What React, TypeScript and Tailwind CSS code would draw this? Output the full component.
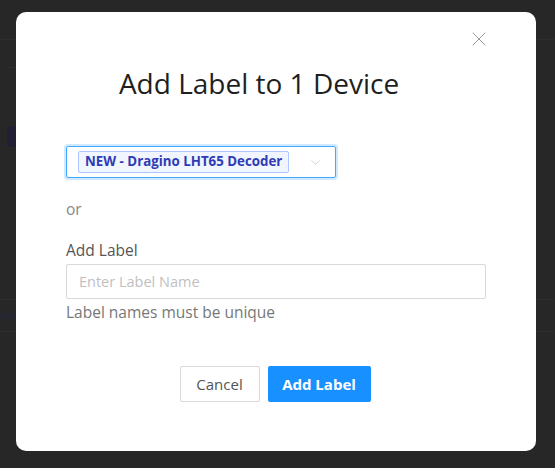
import { X, ChevronDown } from "lucide-react";

export default function App() {
  return (
    <div className="relative w-[555px] h-[468px] bg-[#272727] overflow-hidden font-['Open_Sans',sans-serif]">
      {/* faint page behind the overlay */}
      <div className="absolute inset-0 flex flex-col">
        <div className="h-[40px] border-b border-[#2e2e2e]" />
        <div className="h-[28px] border-b border-[#2e2e2e] ml-[7px] w-[40px]" />
        <div className="mt-[58px] ml-[7px] w-[10px] h-[21px] rounded-[2px] bg-[#231f33]" />
        <div className="mt-[152px] h-[33px] border-y border-[#2e2e2e] flex items-center text-[13px] font-bold text-[#26263a]">orm</div>
      </div>

      <div className="relative mt-[12px] ml-[16px] w-[520px] h-[439px] bg-white rounded-[10px] flex flex-col">
        <button className="absolute top-[15px] right-[45px] text-[#999]">
          <X size={24} strokeWidth={1} />
        </button>

        <h2 className="mt-[52px] pr-[34px] text-center text-[28px] leading-[38px] text-[#1f1f1f]">
          Add Label to 1 Device
        </h2>

        <div className="px-[50px] mt-[44px] flex flex-col">
          <div className="w-[270px] h-[32px] border border-[#40a9ff] rounded-[2px] shadow-[0_0_0_2px_rgba(24,144,255,0.2)] flex items-center pl-[11px] pr-[10px]">
            <span className="h-[22px] px-[6px] flex items-center bg-[#f0f5ff] border border-[#adc6ff] rounded-[2px] text-[13.3px] font-bold text-[#2f3bb5]">
              NEW - Dragino LHT65 Decoder
            </span>
            <ChevronDown size={15} strokeWidth={1} className="ml-auto mr-[2px] text-[#bbb]" />
          </div>

          <p className="mt-[20px] text-[15.5px] leading-[22px] text-[#888]">or</p>

          <label className="mt-[19px] text-[15.5px] leading-[22px] text-[#555]">Add Label</label>
          <input
            className="mt-[3px] w-[420px] h-[35px] border border-[#d9d9d9] rounded-[2px] px-[12px] text-[14.5px] outline-none placeholder:text-[#bfbfbf]"
            placeholder="Enter Label Name"
          />
          <p className="mt-[2px] text-[15.5px] leading-[22px] text-[#777]">Label names must be unique</p>
        </div>

        <div className="mt-[43px] pr-[2px] flex justify-center gap-[8px]">
          <button className="w-[80px] h-[36px] border border-[#d9d9d9] rounded-[2px] bg-white text-[15px] text-[#555]">
            Cancel
          </button>
          <button className="w-[103px] h-[36px] rounded-[2px] bg-[#1890ff] text-[15px] font-bold text-white">
            Add Label
          </button>
        </div>
      </div>
    </div>
  );
}
